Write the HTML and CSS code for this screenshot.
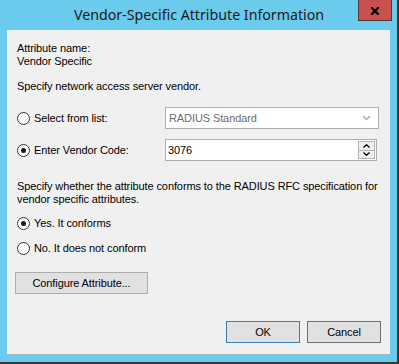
FILE: index.html
```html
<!DOCTYPE html>
<html lang="en">
  <head>
    <meta charset="UTF-8" />
    <title>Vendor-Specific Attribute Information</title>
    <link rel="stylesheet" href="styles.css">
  </head>
  <body>
    <div class="window">
      <div class="titlebar">
        <span class="title">Vendor-Specific Attribute Information</span>
        <div class="close-button">
          <svg viewBox="0 0 8 8" width="8" height="8">
            <path d="M1 1 L7 7 M7 1 L1 7" stroke="#000" stroke-width="2.2" stroke-linecap="square" />
          </svg>
        </div>
      </div>

      <div class="content">
        <div class="text name-text">Attribute name:<br>Vendor Specific</div>
        <div class="text vendor-text">Specify network access server vendor.</div>

        <div class="row row-list">
          <label class="choice">
            <span class="radio"></span>
            Select from list:
          </label>
          <div class="combo">
            <span>RADIUS Standard</span>
            <svg viewBox="0 0 9 6" width="9" height="6">
              <polyline points="1,1 4.5,4.5 8,1" fill="none" stroke="#a8a8a8" stroke-width="1.4" />
            </svg>
          </div>
        </div>

        <div class="row row-code">
          <label class="choice">
            <span class="radio checked"></span>
            Enter Vendor Code:
          </label>
          <div class="numeric">
            <span class="numeric-value">3076</span>
            <div class="spinner">
              <div class="spin-btn">
                <svg viewBox="0 0 7 4" width="7" height="4">
                  <polyline points="0.5,3.5 3.5,0.8 6.5,3.5" fill="none" stroke="#000" stroke-width="1.3" />
                </svg>
              </div>
              <div class="spin-btn">
                <svg viewBox="0 0 7 4" width="7" height="4">
                  <polyline points="0.5,0.5 3.5,3.2 6.5,0.5" fill="none" stroke="#000" stroke-width="1.3" />
                </svg>
              </div>
            </div>
          </div>
        </div>

        <div class="text rfc-text">Specify whether the attribute conforms to the RADIUS RFC specification for vendor specific attributes.</div>

        <label class="row option yes-option">
          <span class="radio checked"></span>
          Yes. It conforms
        </label>
        <label class="row option">
          <span class="radio"></span>
          No. It does not conform
        </label>

        <button class="win-button configure-button">Configure Attribute...</button>

        <div class="footer">
          <button class="win-button default-button">OK</button>
          <button class="win-button">Cancel</button>
        </div>
      </div>
    </div>
  </body>
</html>
```

FILE: styles.css
```css
body {
  margin: 0;
  padding: 0;
  background: #6bcbed;
  font-family: 'Liberation Sans', Arial, sans-serif;
  font-size: 11px;
  color: #000;
}

.window {
  position: relative;
  width: 399px;
  height: 364px;
  box-sizing: border-box;
  background: #6bcbed;
  border-right: 2px solid #2f3a40;
  border-bottom: 2px solid #2f3a40;
  padding: 0 7px 7px 7px;
  display: flex;
  flex-direction: column;
}

.titlebar {
  height: 30px;
  display: flex;
  justify-content: center;
  align-items: flex-start;
}

.title {
  font-family: 'Noto Sans', 'Open Sans', sans-serif;
  font-size: 14.2px;
  line-height: 20px;
  margin-top: 5px;
  margin-left: 1px;
  color: #1a1a1a;
}

.close-button {
  position: absolute;
  top: 0;
  left: 358px;
  width: 32px;
  height: 20px;
  background: #c75050;
  border: 1px solid #5e3434;
  border-top: none;
  display: flex;
  justify-content: center;
  align-items: center;
}

.close-button svg {
  margin-top: 2px;
}

.content {
  flex: 1;
  background: #f0f0f0;
  border-bottom: 1px solid #a9b8bf;
  padding: 12px 9px 0 10px;
  letter-spacing: -0.1px;
  display: flex;
  flex-direction: column;
}

.text {
  line-height: 13px;
}

.vendor-text {
  margin-top: 12px;
}

.row {
  display: flex;
  align-items: center;
}

.row-list {
  height: 22px;
  margin-top: 14px;
}

.row-code {
  height: 22px;
  margin-top: 10px;
}

.choice {
  width: 149px;
  display: flex;
  align-items: center;
}

.radio {
  width: 11px;
  height: 11px;
  border: 1px solid #333;
  border-radius: 50%;
  background: #fff;
  margin-right: 4px;
  display: flex;
  justify-content: center;
  align-items: center;
  flex-shrink: 0;
}

.radio.checked::after {
  content: '';
  width: 5px;
  height: 5px;
  border-radius: 50%;
  background: #1a1a1a;
}

.combo {
  width: 214px;
  height: 22px;
  box-sizing: border-box;
  border: 1px solid #adadad;
  background: #fff;
  color: #6d6d6d;
  display: flex;
  align-items: center;
  justify-content: space-between;
  padding: 0 7px 0 3px;
  margin-left: -1px;
}

.numeric {
  width: 212px;
  height: 22px;
  box-sizing: border-box;
  border: 1px solid #abadb3;
  background: #fff;
  margin-left: -1px;
  display: flex;
  align-items: center;
}

.numeric-value {
  flex: 1;
  padding-left: 2px;
}

.spinner {
  width: 17px;
  height: 18px;
  background: #b4b4b4;
  display: flex;
  flex-direction: column;
  gap: 1px;
  box-sizing: border-box;
  padding: 1px;
  margin-right: 1px;
}

.spin-btn {
  flex: 1;
  background: #f0f0f0;
  display: flex;
  justify-content: center;
  align-items: center;
}

.rfc-text {
  margin-top: 19px;
  width: 372px;
}

.option {
  height: 16px;
}

.yes-option {
  margin-top: 9px;
}

.option + .option {
  margin-top: 9px;
}

.win-button {
  font-family: 'Liberation Sans', Arial, sans-serif;
  font-size: 11px;
  letter-spacing: -0.1px;
  color: #000;
  background: #e1e1e1;
  border: 1px solid #adadad;
  height: 22px;
  width: 74px;
  padding: 0;
  margin: 0;
}

.configure-button {
  width: 133px;
  margin-top: 16px;
  margin-left: -2px;
}

.footer {
  display: flex;
  justify-content: flex-end;
  gap: 7px;
  margin-top: 27px;
}

.default-button {
  border-color: #3c7fb1;
}

.footer .win-button:last-child {
  border-color: #707070;
}
```
